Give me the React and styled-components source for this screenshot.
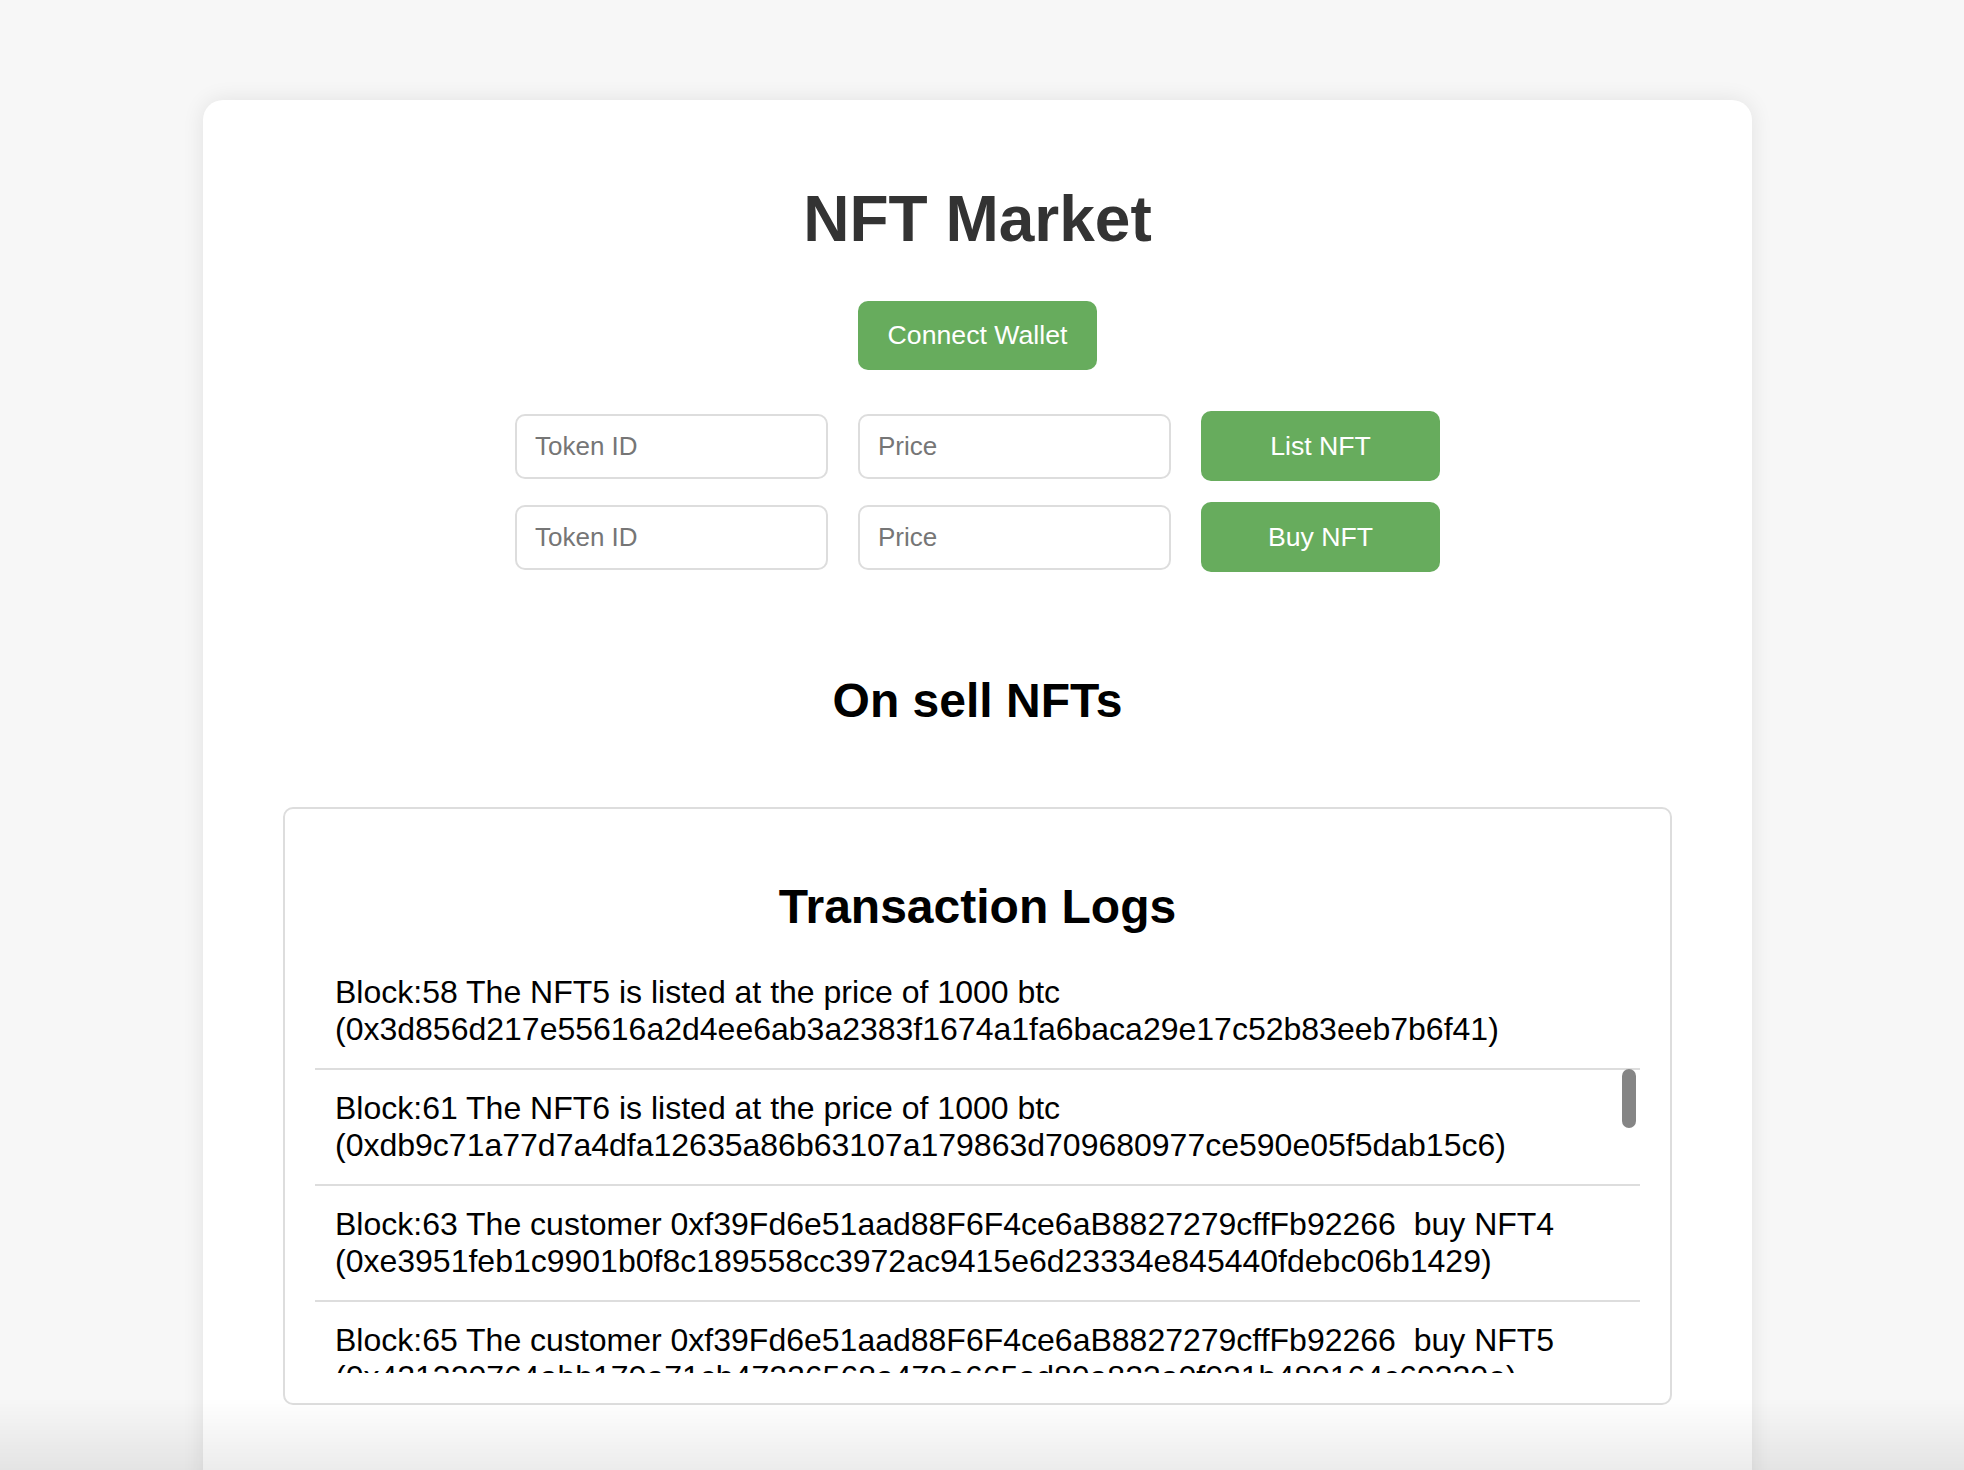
import React from "react";
import styled, { createGlobalStyle } from "styled-components";

const GlobalStyle = createGlobalStyle`
  html, body {
    margin: 0;
    padding: 0;
    background: #f7f7f7;
    font-family: "Liberation Sans", Arial, Helvetica, sans-serif;
    overflow: hidden;
  }
  * { box-sizing: border-box; }
`;

const Page = styled.div`
  height: 100vh;
  overflow: hidden;
  padding: 100px 212px 0 203px;
`;

const Card = styled.main`
  width: 1549px;
  min-height: 1400px;
  background: #ffffff;
  border-radius: 20px;
  box-shadow: 0 0 22px rgba(0, 0, 0, 0.09);
  padding: 80px 80px 80px;
  display: flex;
  flex-direction: column;
  align-items: center;
`;

const Title = styled.h1`
  margin: 2px 0 45px;
  font-size: 64px;
  font-weight: 700;
  color: #333333;
  line-height: normal;
`;

const GreenButton = styled.button`
  width: 239px;
  height: ${(p) => p.$h || 70}px;
  border: none;
  border-radius: 10px;
  background: #67ac5d;
  color: #ffffff;
  font-family: "Liberation Sans", Arial, sans-serif;
  font-size: 26.67px;
  padding: 0;
  cursor: pointer;
`;

const FormGrid = styled.div`
  margin-top: 41px;
  display: grid;
  grid-template-columns: 313px 313px 239px;
  column-gap: 30px;
  row-gap: 21px;
  align-items: center;
`;

const Field = styled.input`
  width: 313px;
  height: 65px;
  border: 2px solid #dddddd;
  border-radius: 10px;
  padding: 0 18px;
  font-family: "Liberation Sans", Arial, sans-serif;
  font-size: 26px;
  color: #333;
  outline: none;
  &::placeholder { color: #767676; }
`;

const Heading = styled.h2`
  margin: ${(p) => p.$m};
  font-size: 48px;
  font-weight: 700;
  color: #000000;
  line-height: normal;
  text-align: center;
`;

const LogBox = styled.section`
  align-self: stretch;
  margin-top: 79px;
  border: 2px solid #dddddd;
  border-radius: 10px;
  padding: 70px 30px 30px;
`;

const ListViewport = styled.div`
  position: relative;
  margin-top: 20px;
`;

const LogList = styled.ul`
  list-style: none;
  margin: 0;
  padding: 0;
  height: 419px;
  overflow-y: auto;
  scrollbar-width: none;
  &::-webkit-scrollbar { display: none; }
`;

const LogItem = styled.li`
  padding: 20px;
  border-bottom: 2px solid #dddddd;
  font-size: 32px;
  line-height: normal;
  color: #000000;
  word-break: break-word;
`;

const Thumb = styled.div`
  position: absolute;
  top: 115px;
  right: 4px;
  width: 14px;
  height: 59px;
  border-radius: 7px;
  background: #858585;
`;

const BottomFade = styled.div`
  position: fixed;
  left: 0;
  right: 0;
  bottom: 0;
  height: 72px;
  pointer-events: none;
  background: linear-gradient(to bottom, rgba(0, 0, 0, 0), rgba(0, 0, 0, 0.075));
`;

const logs = [
  [
    "Block:58 The NFT5 is listed at the price of 1000 btc",
    "(0x3d856d217e55616a2d4ee6ab3a2383f1674a1fa6baca29e17c52b83eeb7b6f41)",
  ],
  [
    "Block:61 The NFT6 is listed at the price of 1000 btc",
    "(0xdb9c71a77d7a4dfa12635a86b63107a179863d709680977ce590e05f5dab15c6)",
  ],
  [
    "Block:63 The customer 0xf39Fd6e51aad88F6F4ce6aB8827279cffFb92266\u00a0 buy NFT4",
    "(0xe3951feb1c9901b0f8c189558cc3972ac9415e6d23334e845440fdebc06b1429)",
  ],
  [
    "Block:65 The customer 0xf39Fd6e51aad88F6F4ce6aB8827279cffFb92266\u00a0 buy NFT5",
    "(0x421320764abb170a71cb47226568a478a665ad80a823a0f021b480164c69320e)",
  ],
  [
    "Block:67 The NFT7 is listed at the price of 500 btc",
    "(0x9a1c3e0b2f4d5a6e7c8b9d0f1a2b3c4d5e6f7a8b9c0d1e2f3a4b5c6d7e8f9a0b)",
  ],
];

export default function App() {
  return (
    <>
      <GlobalStyle />
      <Page>
        <Card>
          <Title>NFT Market</Title>
          <GreenButton $h={69}>Connect Wallet</GreenButton>
          <FormGrid>
            <Field placeholder="Token ID" />
            <Field placeholder="Price" />
            <GreenButton>List NFT</GreenButton>
            <Field placeholder="Token ID" />
            <Field placeholder="Price" />
            <GreenButton>Buy NFT</GreenButton>
          </FormGrid>
          <Heading $m="101px 0 0">On sell NFTs</Heading>
          <LogBox>
            <Heading $m="0">Transaction Logs</Heading>
            <ListViewport>
              <LogList>
                {logs.map(([a, b], i) => (
                  <LogItem key={i}>
                    {a} {b}
                  </LogItem>
                ))}
              </LogList>
              <Thumb />
            </ListViewport>
          </LogBox>
        </Card>
      </Page>
      <BottomFade />
    </>
  );
}
